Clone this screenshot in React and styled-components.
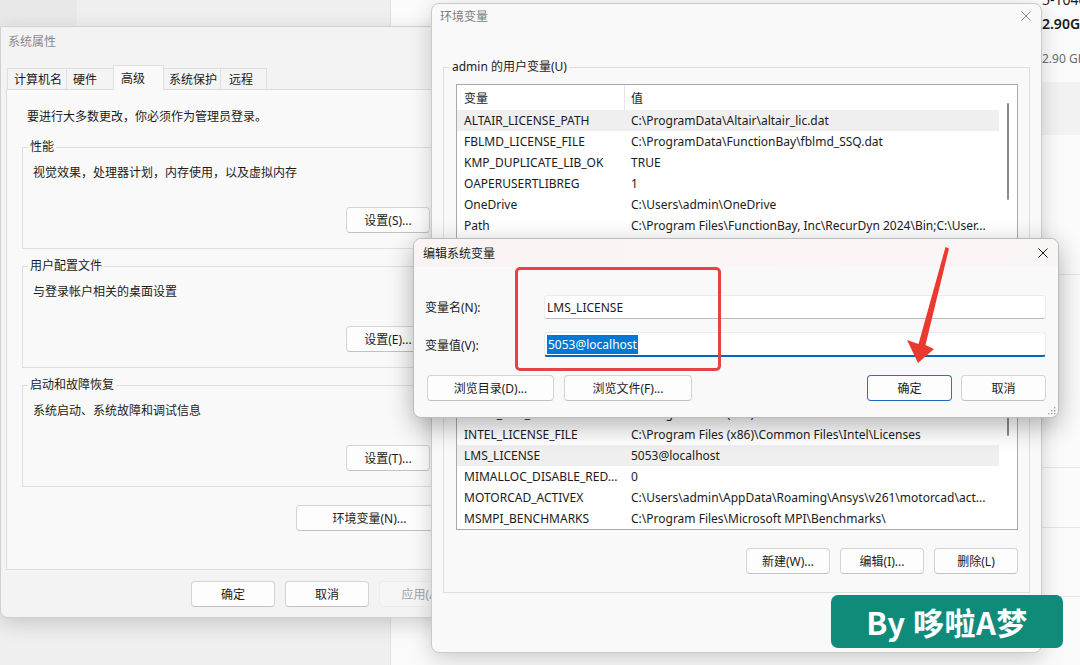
import React from 'react';
import styled, { createGlobalStyle } from 'styled-components';

const GlobalStyle = createGlobalStyle`
  html, body {
    margin: 0;
    padding: 0;
  }
  body {
    font-family: "Noto Sans", "Noto Sans CJK SC", sans-serif;
  }
  * {
    box-sizing: border-box;
  }
`;

const Desktop = styled.div`
  position: relative;
  width: 1080px;
  height: 665px;
  overflow: hidden;
  background: #f0f0f0;
  font-size: 12px;
  color: #1b1b1b;
`;

/* ---------- settings window in the back ---------- */

const BackWindow = styled.div`
  position: absolute;
  inset: 0;
  display: flex;
`;

const NavPane = styled.div`
  width: 391px;
  flex: none;
  background: #efefef;
  border-right: 1px solid #e2e2e2;
`;

const NavItem = styled.div`
  width: 77px;
  height: 25px;
  background: #e8e8e8;
  border-radius: 0 0 4px 0;
`;

const ContentPane = styled.div`
  flex: 1;
  background: #fafafa;
  display: flex;
  flex-direction: column;
`;

const SpecTop = styled.div`
  height: 82px;
  padding-left: 651px;
  background: #fbfbfb;
  white-space: nowrap;
`;

const SpecLine = styled.div`
  font-size: ${p => p.size}px;
  line-height: ${p => p.lh}px;
  margin-top: ${p => p.mt || 0}px;
  color: ${p => p.muted ? '#6b6b6b' : '#1a1a1a'};
  font-weight: ${p => p.bold ? 600 : 400};
`;

const Band = styled.div`
  height: ${p => p.h}px;
  background: ${p => p.bg || '#fbfbfb'};
  border-bottom: ${p => p.line ? '1px solid #e6e6e6' : 'none'};
`;

const InstallRow = styled.div`
  display: flex;
  padding-left: 56px;
  margin-top: 5px;
  font-size: 14px;
  line-height: 16px;
  color: #1f1f1f;
`;

const InstallLabel = styled.span`
  width: 110px;
`;

const InstallValue = styled.span`
  color: #5f5f5f;
`;

/* ---------- common window parts ---------- */

const Button = styled.div`
  width: ${p => p.w}px;
  height: 26px;
  flex: none;
  display: flex;
  align-items: center;
  justify-content: center;
  background: ${p => p.disabled ? '#f5f5f5' : '#fdfdfd'};
  border: 1px solid ${p => p.primary ? '#2a72c6' : p.disabled ? '#ececec' : '#d4d4d4'};
  border-bottom-color: ${p => p.primary ? '#1f66bd' : p.disabled ? '#ececec' : '#c2c2c2'};
  border-radius: 4px;
  color: ${p => p.disabled ? '#a3a3a3' : '#1b1b1b'};
  font-size: 12px;
  white-space: nowrap;
  overflow: hidden;
`;

const Close = ({ color }) => (
  <svg width="10" height="10" viewBox="0 0 10 10">
    <path d="M0.5 0.5L9.5 9.5M9.5 0.5L0.5 9.5" stroke={color} strokeWidth="1" />
  </svg>
);

/* ---------- 系统属性 ---------- */

const SysWindow = styled.div`
  position: absolute;
  left: 0;
  top: 26px;
  width: 474px;
  height: 592px;
  background: #f3f3f3;
  border: 1px solid #d0d0d0;
  border-radius: 0 0 8px 8px;
  box-shadow: 0 6px 20px rgba(0, 0, 0, 0.16);
  display: flex;
  flex-direction: column;
`;

const SysTitle = styled.div`
  height: 35px;
  padding: 7px 0 0 7px;
  line-height: 16px;
  color: #8a8a8a;
`;

const TabStrip = styled.div`
  height: 27px;
  margin-left: 6px;
  display: flex;
  align-items: flex-end;
`;

const Tab = styled.div`
  width: ${p => p.w}px;
  height: ${p => p.active ? 25 : 21}px;
  margin-bottom: ${p => p.active ? -1 : 0}px;
  padding-left: ${p => p.pl}px;
  display: flex;
  align-items: center;
  background: ${p => p.active ? '#f9f9f9' : '#f4f4f4'};
  border: 1px solid #dedede;
  border-bottom: none;
  margin-right: -1px;
  position: relative;
  z-index: ${p => p.active ? 1 : 0};
`;

const TabPanel = styled.div`
  margin: 0 5px;
  height: 481px;
  border: 1px solid #dcdcdc;
  background: #f9f9f9;
  padding: 18px 24px 0 15px;
  display: flex;
  flex-direction: column;
`;

const Intro = styled.div`
  line-height: 18px;
  padding-left: 5px;
`;

const Group = styled.div`
  margin: ${p => p.margin};
  border: 1px solid #dedede;
  padding: ${p => p.pad};
  display: flex;
  flex-direction: column;
`;

const GroupLabel = styled.div`
  margin: -9px 0 0 ${p => p.ml}px;
  width: fit-content;
  padding: 0 2px;
  line-height: 16px;
  background: ${p => p.bg};
`;

const GroupText = styled.div`
  margin-top: 9px;
  line-height: 18px;
`;

const RightButton = styled(Button)`
  align-self: flex-end;
  margin-top: ${p => p.mt}px;
`;

const SysFooter = styled.div`
  display: flex;
  justify-content: flex-end;
  gap: 10px;
  padding: 11px 10px 0 0;
`;

/* ---------- 环境变量 ---------- */

const EnvWindow = styled.div`
  position: absolute;
  left: 431px;
  top: 3px;
  width: 611px;
  height: 650px;
  background: #f9f9f9;
  border: 1px solid #cacaca;
  border-radius: 8px;
  box-shadow: 0 6px 22px rgba(0, 0, 0, 0.18);
  display: flex;
  flex-direction: column;
`;

const TitleBar = styled.div`
  height: ${p => p.h}px;
  flex: none;
  display: flex;
  align-items: center;
  justify-content: space-between;
  padding: 0 10px 0 ${p => p.pl}px;
  color: ${p => p.dim ? '#7d7d7d' : '#1a1a1a'};
  background: ${p => p.tint ? 'linear-gradient(90deg, #f9f4f3, #fbf6f5 60%, #f9f5f4)' : 'transparent'};
`;

const ListBox = styled.div`
  margin-top: 9px;
  height: ${p => p.h}px;
  border: 1px solid #a9a9a9;
  background: #ffffff;
  display: flex;
  overflow: hidden;
`;

const Table = styled.div`
  flex: 1;
  display: flex;
  flex-direction: column;
`;

const HeaderRow = styled.div`
  height: 25px;
  flex: none;
  display: flex;
  align-items: stretch;
`;

const HeaderCell = styled.div`
  width: ${p => p.w ? `${p.w}px` : 'auto'};
  flex: ${p => p.w ? 'none' : 1};
  display: flex;
  align-items: center;
  padding-left: ${p => p.pl}px;
  border-right: ${p => p.w ? '1px solid #e6e6e6' : 'none'};
`;

const Row = styled.div`
  height: 21px;
  flex: none;
  display: flex;
  align-items: center;
  background: ${p => p.sel ? '#efefef' : 'transparent'};
  white-space: nowrap;
`;

const Cell = styled.div`
  width: ${p => p.w ? `${p.w}px` : 'auto'};
  flex: ${p => p.w ? 'none' : 1};
  padding-left: ${p => p.pl}px;
  overflow: hidden;
  line-height: 21px;
`;

const ScrollTrack = styled.div`
  width: 18px;
  flex: none;
  padding-left: 8px;
`;

const Thumb = styled.div`
  width: 2px;
  height: ${p => p.h}px;
  margin-top: ${p => p.top}px;
  background: #8c8c8c;
  border-radius: 1px;
`;

const ButtonRow = styled.div`
  display: flex;
  justify-content: flex-end;
  gap: 10px;
  margin-top: ${p => p.mt}px;
`;

/* ---------- 编辑系统变量 ---------- */

const EditDialog = styled.div`
  position: absolute;
  left: 413px;
  top: 238px;
  width: 646px;
  height: 180px;
  background: #f9f9f9;
  border: 1px solid #bcbcbc;
  border-radius: 8px;
  box-shadow: 0 8px 26px rgba(0, 0, 0, 0.3);
  overflow: hidden;
  display: flex;
  flex-direction: column;
`;

const EditForm = styled.div`
  padding: 28px 12px 0 11px;
  display: flex;
  flex-direction: column;
`;

const FieldRow = styled.div`
  display: flex;
  align-items: center;
  margin-top: ${p => p.mt || 0}px;
`;

const FieldLabel = styled.div`
  width: 119px;
  flex: none;
`;

const Input = styled.div`
  flex: 1;
  height: ${p => p.focus ? 25 : 24}px;
  background: #ffffff;
  border: 1px solid #ececec;
  border-bottom: ${p => p.focus ? '2px solid #0067c0' : '1px solid #b9b9b9'};
  border-radius: 3px;
  padding-left: 2px;
  display: flex;
  align-items: center;
`;

const Selected = styled.span`
  background: #0078d4;
  color: #ffffff;
  padding: 1px 1px;
`;

const EditButtons = styled.div`
  display: flex;
  justify-content: space-between;
  margin-top: 18px;
  padding-left: 2px;
`;

const ButtonGroup = styled.div`
  display: flex;
  gap: ${p => p.gap}px;
`;

const Grip = styled.svg`
  position: absolute;
  right: 2px;
  bottom: 2px;
`;

/* ---------- annotations ---------- */

const RedBox = styled.div`
  position: absolute;
  left: 515px;
  top: 267px;
  width: 206px;
  height: 104px;
  border: 3px solid #e64444;
  border-radius: 5px;
`;

const Overlay = styled.svg`
  position: absolute;
  left: 0;
  top: 0;
  pointer-events: none;
`;

const Watermark = styled.div`
  position: absolute;
  left: 831px;
  top: 595px;
  width: 232px;
  height: 53px;
  background: #0f8b7a;
  border-radius: 7px;
  display: flex;
  align-items: center;
  justify-content: center;
  color: #ffffff;
  font-family: "Noto Sans CJK SC", sans-serif;
  font-size: 31px;
  font-weight: 700;
  letter-spacing: 0.5px;
`;

const userVars = [
  ['ALTAIR_LICENSE_PATH', 'C:\\ProgramData\\Altair\\altair_lic.dat', true],
  ['FBLMD_LICENSE_FILE', 'C:\\ProgramData\\FunctionBay\\fblmd_SSQ.dat'],
  ['KMP_DUPLICATE_LIB_OK', 'TRUE'],
  ['OAPERUSERTLIBREG', '1'],
  ['OneDrive', 'C:\\Users\\admin\\OneDrive'],
  ['Path', 'C:\\Program Files\\FunctionBay, Inc\\RecurDyn 2024\\Bin;C:\\User...'],
];

const systemVars = [
  ['ComSpec', 'C:\\Windows\\system32\\cmd.exe'],
  ['DriverData', 'C:\\Windows\\System32\\Drivers\\DriverData'],
  ['INTEL_DEV_REDIST', 'C:\\Program Files (x86)\\Common Files\\Intel\\Shared Libraries\\'],
  ['INTEL_LICENSE_FILE', 'C:\\Program Files (x86)\\Common Files\\Intel\\Licenses'],
  ['LMS_LICENSE', '5053@localhost', true],
  ['MIMALLOC_DISABLE_RED...', '0'],
  ['MOTORCAD_ACTIVEX', 'C:\\Users\\admin\\AppData\\Roaming\\Ansys\\v261\\motorcad\\act...'],
  ['MSMPI_BENCHMARKS', 'C:\\Program Files\\Microsoft MPI\\Benchmarks\\'],
];

const tabs = [
  { label: '计算机名', w: 60, pl: 6 },
  { label: '硬件', w: 48, pl: 6 },
  { label: '高级', w: 51, pl: 7, active: true },
  { label: '系统保护', w: 58, pl: 5 },
  { label: '远程', w: 47, pl: 8 },
];

const sysGroups = [
  { title: '性能', text: '视觉效果，处理器计划，内存使用，以及虚拟内存', btn: '设置(S)...', mt: 21 },
  { title: '用户配置文件', text: '与登录帐户相关的桌面设置', btn: '设置(E)...', mt: 17 },
  { title: '启动和故障恢复', text: '系统启动、系统故障和调试信息', btn: '设置(T)...', mt: 17 },
];

function VarList({ rows, height, thumbTop, thumbH }) {
  return (
    <ListBox h={height}>
      <Table>
        <HeaderRow>
          <HeaderCell w={168} pl={7}>变量</HeaderCell>
          <HeaderCell pl={6}>值</HeaderCell>
        </HeaderRow>
        {rows.map(([name, value, sel]) => (
          <Row key={name} sel={sel}>
            <Cell w={168} pl={7}>{name}</Cell>
            <Cell pl={6}>{value}</Cell>
          </Row>
        ))}
      </Table>
      <ScrollTrack>
        <Thumb top={thumbTop} h={thumbH} />
      </ScrollTrack>
    </ListBox>
  );
}

export default function App() {
  return (
    <>
      <GlobalStyle />
      <Desktop>
        <BackWindow>
          <NavPane>
            <NavItem />
          </NavPane>
          <ContentPane>
            <SpecTop>
              <SpecLine size={14} lh={16} mt={-8}>5-10400 CPU @</SpecLine>
              <SpecLine size={14} lh={20} mt={6} bold>2.90GHz</SpecLine>
              <SpecLine size={12} lh={16} mt={17} muted>2.90 GHz</SpecLine>
            </SpecTop>
            <Band h={53} bg="#f2f2f2" />
            <Band h={140} line />
            <Band h={193} line />
            <Band h={60} line />
            <Band h={69} line />
            <InstallRow>
              <InstallLabel>安装日期</InstallLabel>
              <InstallValue>2025/1/2</InstallValue>
            </InstallRow>
          </ContentPane>
        </BackWindow>

        <SysWindow>
          <SysTitle>系统属性</SysTitle>
          <TabStrip>
            {tabs.map(t => (
              <Tab key={t.label} w={t.w} pl={t.pl} active={t.active}>{t.label}</Tab>
            ))}
          </TabStrip>
          <TabPanel>
            <Intro>要进行大多数更改，你必须作为管理员登录。</Intro>
            {sysGroups.map(g => (
              <Group key={g.title} margin={`${g.mt}px 0 0`} pad="0 12px 15px 10px">
                <GroupLabel ml={-5} bg="#f9f9f9">{g.title}</GroupLabel>
                <GroupText>{g.text}</GroupText>
                <RightButton w={84} mt={25}>{g.btn}</RightButton>
              </Group>
            ))}
            <RightButton w={147} mt={18}>环境变量(N)...</RightButton>
          </TabPanel>
          <SysFooter>
            <Button w={84}>确定</Button>
            <Button w={84}>取消</Button>
            <Button w={84} disabled>应用(A)</Button>
          </SysFooter>
        </SysWindow>

        <EnvWindow>
          <TitleBar h={24} pl={8} dim>
            <span>环境变量</span>
            <Close color="#8f8f8f" />
          </TitleBar>
          <Group margin="39px 11px 0" pad="0 11px 18px 12px">
            <GroupLabel ml={-6} bg="#f9f9f9">admin 的用户变量(U)</GroupLabel>
            <VarList rows={userVars} height={156} thumbTop={18} thumbH={97} />
            <ButtonRow mt={18}>
              <Button w={84}>新建(N)...</Button>
              <Button w={84}>编辑(E)...</Button>
              <Button w={84}>删除(D)</Button>
            </ButtonRow>
          </Group>
          <Group margin="15px 11px 0" pad="0 11px 18px 12px">
            <GroupLabel ml={-6} bg="#f9f9f9">系统变量(S)</GroupLabel>
            <VarList rows={systemVars} height={195} thumbTop={40} thumbH={60} />
            <ButtonRow mt={18}>
              <Button w={84}>新建(W)...</Button>
              <Button w={84}>编辑(I)...</Button>
              <Button w={84}>删除(L)</Button>
            </ButtonRow>
          </Group>
        </EnvWindow>

        <EditDialog>
          <TitleBar h={28} pl={9} tint>
            <span>编辑系统变量</span>
            <Close color="#1a1a1a" />
          </TitleBar>
          <EditForm>
            <FieldRow>
              <FieldLabel>变量名(N):</FieldLabel>
              <Input>LMS_LICENSE</Input>
            </FieldRow>
            <FieldRow mt={13}>
              <FieldLabel>变量值(V):</FieldLabel>
              <Input focus><Selected>5053@localhost</Selected></Input>
            </FieldRow>
            <EditButtons>
              <ButtonGroup gap={10}>
                <Button w={127}>浏览目录(D)...</Button>
                <Button w={128}>浏览文件(F)...</Button>
              </ButtonGroup>
              <ButtonGroup gap={9}>
                <Button w={85} primary>确定</Button>
                <Button w={85}>取消</Button>
              </ButtonGroup>
            </EditButtons>
          </EditForm>
          <Grip width="9" height="9" viewBox="0 0 9 9">
            <g fill="#a8a8a8">
              <rect x="7" y="1" width="1.4" height="1.4" />
              <rect x="4" y="4" width="1.4" height="1.4" />
              <rect x="7" y="4" width="1.4" height="1.4" />
              <rect x="1" y="7" width="1.4" height="1.4" />
              <rect x="4" y="7" width="1.4" height="1.4" />
              <rect x="7" y="7" width="1.4" height="1.4" />
            </g>
          </Grip>
        </EditDialog>

        <RedBox />
        <Overlay width="1080" height="665" viewBox="0 0 1080 665">
          <polygon
            points="945.5,247 949,248.5 925.5,345 934,349 918,363 907,340 918.5,344"
            fill="#ea3a30"
          />
        </Overlay>

        <Watermark>By 哆啦A梦</Watermark>
      </Desktop>
    </>
  );
}
